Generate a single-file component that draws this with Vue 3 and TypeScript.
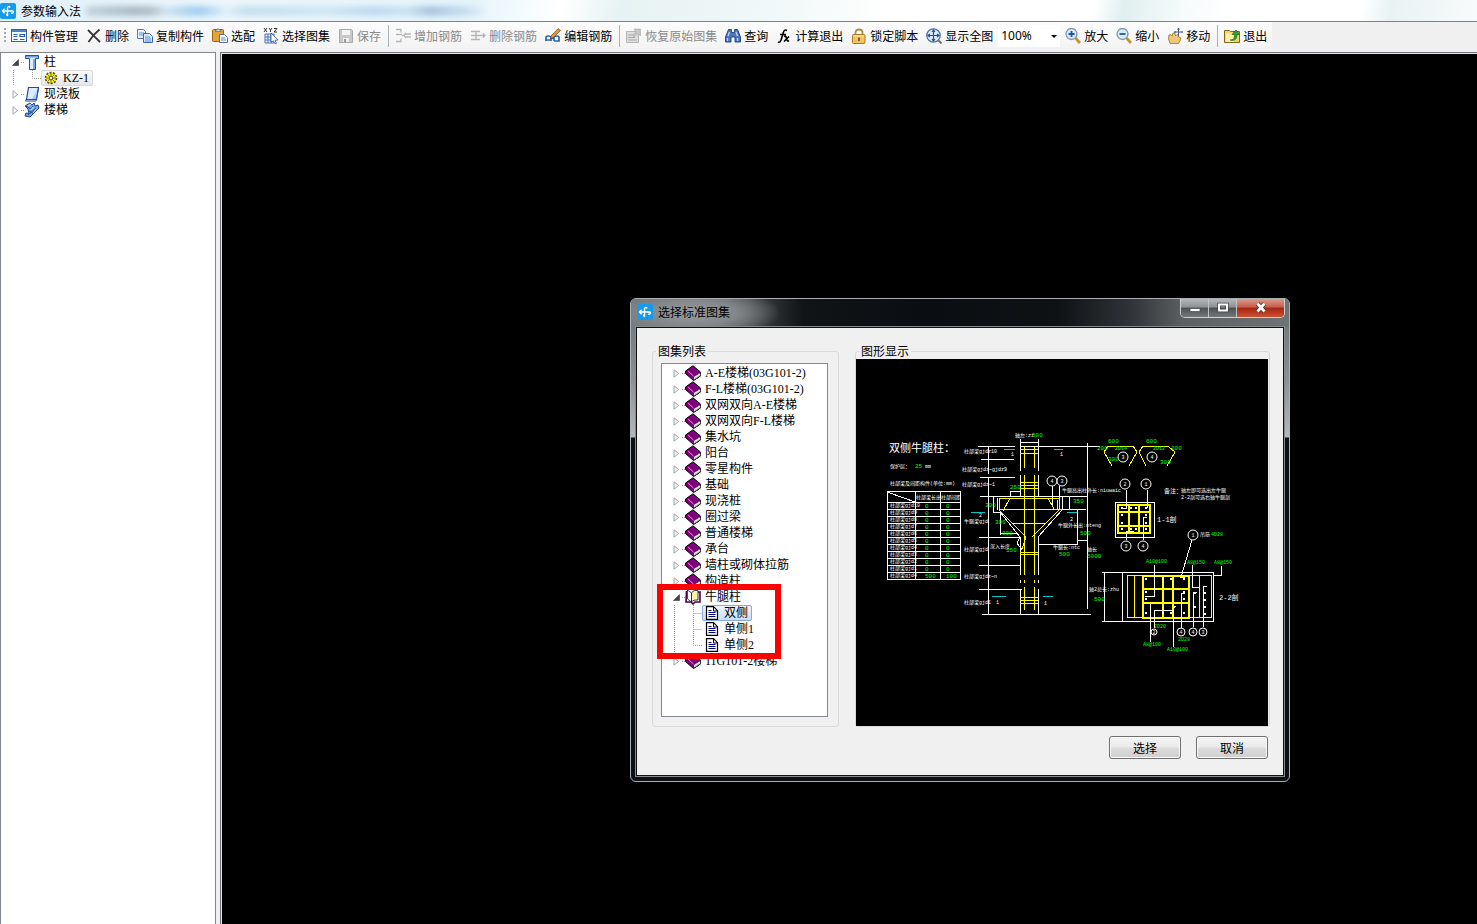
<script setup lang="ts">
import { ref } from 'vue'

type Tool = { label: string; icon: string; disabled?: boolean }
type Line = [string, string, number?]
type Label = [number, number, string, string, number?]

const icons: Record<string, string> = {
  app: '<rect width="16" height="16" rx="2" fill="#159bea"/><path d="M2.500 8h11M4.500 5.800L2.500 8l2 2.200M13.500 8c0 2-1 2.500-2.500 2.200M8 12.500c-1.500 0-1.500-1-1.500-2M7.500 13V5c0-1.500 2-2 2.500-.5" fill="none" stroke="#fff" stroke-width="1.400"/>',
  manage: '<rect x=".5" y="1.500" width="15" height="12" fill="#f2f8ff" stroke="#3b62a0"/><path d="M1 2h14v2H1z" fill="#4f7fc2"/><path d="M2.500 6.500h4M2.500 8.500h4M2.500 11.500h4M9 6.500h4.500v2H9zM9 11.500h4.500" stroke="#2c5ea8" fill="none" stroke-width="1.200"/>',
  remove: '<path d="M2 2c3 3 8 8 12 12M13.500 1.500C9 5 5 10 2.500 14" stroke="#333" stroke-width="1.800" fill="none"/>',
  copy: '<path d="M.5 1.500h6l2 2v7h-8z" fill="#eaf3ff" stroke="#5079bb"/><path d="M2 5h5M2 7h5" stroke="#5b8ed6"/><path d="M6.500 5.500h6l3 3v6h-9z" fill="#dceaff" stroke="#3a66b0"/><path d="M8 9h5M8 11h6M8 13h6" stroke="#5b8ed6"/>',
  paste: '<rect x=".5" y="1.500" width="11" height="12" rx="1" fill="#e3a43c" stroke="#9a6414"/><path d="M3.500 3.500V2H5L6 .5 7.500 2H9v1.500z" fill="#dcdcdc" stroke="#666" stroke-width=".7"/><path d="M7.500 6.500h5l3 3v5h-8z" fill="#f2f6ff" stroke="#5a6f9c"/><path d="M9 10h4M9 12h5" stroke="#5b8ed6"/>',
  atlas: '<path d="M1 0l3 4M4 0L1 4M6 0l1.500 2L9 0M7.500 2v2M11 .5h3L11 4h3" stroke="#222" stroke-width=".9" fill="none"/><path d="M2 6h9v9H2z" fill="#e7f1ff" stroke="#4b78b8"/><path d="M2 9h9M2 12h9M5 6v9M8 6v9" stroke="#4b78b8"/><path d="M8 5l7 7-3 .3 1.500 3-1.500.6-1.500-3L8 14z" fill="#fff" stroke="#334e80" stroke-width=".8"/>',
  save: '<path d="M1.500 1.500h12l1 1v12h-13z" fill="#c9c9c9" stroke="#aaa"/><path d="M4 2h8v5H4z" fill="#f4f4f4"/><path d="M5 10h6v4H5z" fill="#efefef"/><path d="M6 11h2v3H6z" fill="#999"/>',
  addbar: '<path d="M1 1.500h5v3M1 6.500h6M1 13.500h5v-3M7 7.500h3M11 5l-2 2.500 2 2.500M10 6h6M10 9h6" stroke="#b5b5b5" fill="none" stroke-width="1.300"/>',
  delbar: '<path d="M1 3.500h9M1 7.500h9M1 11.500h9M6 3.500v8M10 7.500h5M13 5.500l2 2-2 2" stroke="#b5b5b5" fill="none" stroke-width="1.400"/>',
  editbar: '<path d="M1 13V9.500c0-2 5-2 5 0V13M1 12h5M6 11l3-2M9 13V9.500c0-2 5-2 5 0V13h-5" stroke="#2a65b5" fill="none" stroke-width="1.700"/><path d="M6 8L13 .7l2.500 1.800-7 7-3 .8z" fill="#d99a43" stroke="#754512" stroke-width=".7"/>',
  restore: '<path d="M.5 3.500h12v11H.5z" fill="#e0e0e0" stroke="#b5b5b5"/><path d="M2 7h8M2 9.500h7M2 12h9" stroke="#aaa"/><path d="M8 1h6.500v7L12 5.500 8 9 6.500 7l3.500-3z" fill="#c6c6c6" stroke="#aaa" stroke-width=".6"/>',
  find: '<path d="M3.500 1.500h3v3h3v-3h3l3 7.500v5h-5.500V9H6v5H.5V9z" fill="#4b76b8" stroke="#1d3d78" stroke-width=".9"/><path d="M3 8l1.500-4M12.500 8l-1.500-4M2.500 10v3M12.500 10v3" stroke="#c3dbff" stroke-width="1.200"/>',
  fx: '<path d="M2 14c2 1 3-1 4-5l1.500-5C8 2 9.500 1.500 11 2.500M4 6.500h6M8 8.500c2-1 2 0 2.500 2s1 3 2.500 2M13 8.500l-5 5" stroke="#000" stroke-width="1.600" fill="none"/>',
  lock: '<path d="M4.500 8V4.500c0-4 7-4 7 0V8" fill="none" stroke="#b08f45" stroke-width="1.800"/><rect x="1.500" y="6.500" width="12.500" height="9" rx="1" fill="#f0c561" stroke="#a67a2a"/><path d="M8 9.500v3.500" stroke="#664511" stroke-width="1.600"/><path d="M2.500 8h10.500" stroke="#ffe9a8"/>',
  fit: '<circle cx="7.500" cy="7.500" r="6.700" fill="#deedfc" stroke="#52729c" stroke-width="1.300"/><path d="M7.500 2.500v10M2.500 7.500h10M6 4l1.500-2L9 4M6 11l1.500 2L9 11M4 6L2 7.500 4 9M11 6l2 1.500L11 9" stroke="#244f98" fill="none" stroke-width="1.200"/><path d="M12.500 12.500l3 3" stroke="#8c6a4b" stroke-width="2"/>',
  zoomin: '<circle cx="6.500" cy="6" r="5.500" fill="#d8eafc" stroke="#8295a9" stroke-width="1.300"/><path d="M3.500 6h6M6.500 3v6" stroke="#1e559e" stroke-width="1.800"/><path d="M10.500 10l4.500 5" stroke="#c59336" stroke-width="2.800"/>',
  zoomout: '<circle cx="6.500" cy="6" r="5.500" fill="#d8eafc" stroke="#8295a9" stroke-width="1.300"/><path d="M3.500 6h6" stroke="#1e559e" stroke-width="1.800"/><path d="M10.500 10l4.500 5" stroke="#c59336" stroke-width="2.800"/>',
  pan: '<path d="M3 15.500L1.500 11 2 7l2-.5L5 8l1-3h2l.5 3L10 6.500l1.500.5v2l2 .5V12l-2 3.500z" fill="#efc875" stroke="#9b7434" stroke-width=".8"/><path d="M11.500 0v8M7.500 4h8M10.500 1.500l1-1.500 1 1.500M8.500 3l-1 1 1 1M14.500 3l1 1-1 1" stroke="#465c85" fill="none"/>',
  exit: '<path d="M.5 2.500h5l1 1h9v11H.5z" fill="#f5d467" stroke="#84651c"/><path d="M2 5.500h8V14H2z" fill="#fff0a8"/><path d="M6 12c4 0 4.500-2 4.500-5.500H8L12 2l3.500 4.500H13c0 5.500-3 6.500-7 5.500z" fill="#2fa23b" stroke="#156a20" stroke-width=".7"/>',
  column: '<path d="M1.500 1.500h13v3h-3v11h-6v-11h-4z" fill="#dcecff" stroke="#1e4fa8"/><path d="M2 2h12v1.500H2z" fill="#6f9fe2"/><path d="M9 5h2v10H9z" fill="#7ba8e8"/>',
  gear: '<circle cx="7" cy="7" r="5.500" fill="#f4ed22" stroke="#4d4a00" stroke-width="1.500" stroke-dasharray="2 1.400"/><path d="M7 2v10M2 7h10M3.500 3.500l7 7M10.500 3.500l-7 7" stroke="#6b6700" stroke-width=".8"/><circle cx="7" cy="7" r="1.800" fill="#fff" stroke="#555"/>',
  slab: '<path d="M4.500 1.500h10l-2 12h-10z" fill="#dcecff" stroke="#1e4fa8" stroke-width="1.200"/><path d="M2.500 13l-1 2h10.500l2.500-13" fill="none" stroke="#1e4fa8"/><path d="M8 13l5-9-1 9z" fill="#a8c9f4"/>',
  stair: '<path d="M1 4l5-3 2 2 2-2 1 3 3-1 1 3-9 9-5-1 1-3 3 .5L4 7z" fill="#78a6e5" stroke="#1b488f"/><path d="M2 4l5 3 2-3M5 9l4 2 2-4M4 13l8-7" stroke="#1b488f" fill="none"/><path d="M4 4l3-2M7 8l2-3M9 11l3-4" stroke="#e5f1ff"/>',
  book: '<path d="M.5 6L8 .8 15.500 7v4L8.500 15.500.5 8.500z" fill="#800080" stroke="#000"/><path d="M8.500 11.800l7-4.300v3.300l-7 4.400z" fill="#fff" stroke="#222" stroke-width=".8"/><path d="M3 6l5.500 5" stroke="#d9a0d9" stroke-width=".9"/><path d="M9.500 13.400l5.500-3.400" stroke="#aaa" stroke-width=".7"/>',
  openbook: '<path d="M1.500 2L1 13h5l2 2 2-2h5V3h-2" fill="#fff" stroke="#4a004a" stroke-width="1.600"/><path d="M2.500 1l4 3v9l-4-3z" fill="#fff" stroke="#222" stroke-width=".8"/><path d="M6.500 13V4C8 1.500 10 1 13 1.500V11c-3 0-5 0-6.500 2z" fill="#fbf4b0" stroke="#222" stroke-width=".9"/>',
  page: '<path d="M1.500.700h7l4 4v8.600h-11z" fill="#fff" stroke="#000" stroke-width="1.200"/><path d="M8.500 1v4h4" fill="none" stroke="#000"/><path d="M3.500 4.500h3M3.500 6.500h7M3.500 8.500h7M3.500 10.500h7" stroke="#00007c"/>',
}

const firstTools: Tool[] = [
  { label: '构件管理', icon: 'manage' }, { label: '删除', icon: 'remove' },
  { label: '复制构件', icon: 'copy' }, { label: '选配', icon: 'paste' },
  { label: '选择图集', icon: 'atlas' }, { label: '保存', icon: 'save', disabled: true },
]
const barTools: Tool[] = [
  { label: '增加钢筋', icon: 'addbar', disabled: true }, { label: '删除钢筋', icon: 'delbar', disabled: true },
  { label: '编辑钢筋', icon: 'editbar' },
]
const viewTools: Tool[] = [
  { label: '恢复原始图集', icon: 'restore', disabled: true }, { label: '查询', icon: 'find' },
  { label: '计算退出', icon: 'fx' }, { label: '锁定脚本', icon: 'lock' }, { label: '显示全图', icon: 'fit' },
]
const zoomTools: Tool[] = [
  { label: '放大', icon: 'zoomin' }, { label: '缩小', icon: 'zoomout' }, { label: '移动', icon: 'pan' },
]
const zoom = ref('100%')

type Node = { label: string; icon: string; open?: boolean; children?: string[] }
const members: Node[] = [
  { label: '柱', icon: 'column', open: true, children: ['KZ-1'] },
  { label: '现浇板', icon: 'slab' },
  { label: '楼梯', icon: 'stair' },
]
const atlases: Node[] = [
  ...['A-E楼梯(03G101-2)', 'F-L楼梯(03G101-2)', '双网双向A-E楼梯', '双网双向F-L楼梯', '集水坑', '阳台', '零星构件',
    '基础', '现浇桩', '圈过梁', '普通楼梯', '承台', '墙柱或砌体拉筋', '构造柱'].map((label) => ({ label, icon: 'book' })),
  { label: '牛腿柱', icon: 'openbook', open: true, children: ['双侧', '单侧1', '单侧2'] },
  { label: '11G101-2楼梯', icon: 'book' },
]
const selected = ref('双侧')

const W = '#fff', Y = '#ff0', G = '#0f0', C = '#00c8c8'
const rowY = Array.from({ length: 11 }, (_, i) => 143 + i * 7)
const lines: Line[] = [
  /* rebar table */
  [W, 'M31 132H104V220H31ZM59 132V220M84 132V220M31 133L59 143' + rowY.map((y) => `M31 ${y}H104`).join('')],
  /* column faces and dimension lines */
  [W, 'M164 80V112M182 80V112M164 116V137M182 116V137M164 178V216M182 178V216M164 221V224M182 221V224M164 230V256M182 230V256'],
  [W, 'M164 83H182M122 87H159M164 87H244M125 100H158M124 118H159M124 137H231M123 178H164M123 206H164M123 230H166M126 255H235'],
  [W, 'M132 87V115M132 118V255M231 84V250M154 137V132H164'],
  [W, 'M137 137V153H144L164 178M206 137V151L182 178M141 139V151M144 153V176M144 174H161M164 178L161 184L166 191'],
  [W, 'M213 137V150M206 150H230M221 150V181M182 185H221V181H231M196 127V148M203 127V139'],
  /* column rebar */
  [Y, 'M168 87V109M178 87V109M168 116V216M178 116V216M168 221V224M178 221V224M168 228V251M178 228V251'],
  [Y, 'M164 90H182M164 94H182M164 123H182M164 126H182M164 129H182M164 193H182M164 195H182M164 238H182M164 241H182M164 244H182'],
  [Y, 'M203 139H143V151L170 178M203 139V151L176 178M143 150H206M157 164H190M154 139L147 152M192 139L198 150M201 141V151M170 178L166 190'],
  [C, 'M148 90H159M198 90H207M115 153H129M211 153H221M136 237H150M187 237H197'],
  /* bent bars */
  [Y, 'M256 107L248 93L252 87H277L281 93L273 107M290 107L283 93L287 87H312L319 93L311 107'],
  /* section 1-1 */
  [W, 'M259 143H298V178H259Z'],
  [Y, 'M262 146H294V174H262ZM273 146V174M283 146V174M262 153H294M262 167H294', 2],
  [W, 'M270 131V149H266M291 131V149M270 181V172H278M287 181V158H291'],
  /* section 2-2 */
  [W, 'M246 213H357V262H246M266 213V262M248 213V262M336 206V228H344M365 207V216H357'],
  [Y, 'M271 216H355V258H271ZM278 216V258M343 216V258'],
  [Y, 'M287 217H333V259H287ZM307 217V259M317 217V259M287 230H333M287 244H333', 2],
  [W, 'M298 206V237H289M336 181L325 218H329M337 268V233H341M347 268V227H351M325 269V234H329M298 269V251H318M294 283V245M317 288V249L320 247'],
  /* bar dots */
  [W, 'M265 149h2M274 149h2M279 149h2M289 149h2M265 156h2M289 156h2M265 164h2M289 164h2M265 170h2M274 170h2M279 170h2M289 170h2M289 220h2M306 220h2M314 220h2M327 220h2M289 233h2M327 233h2M289 240h2M327 240h2M289 254h2M306 254h2M314 254h2M327 254h2M338 234h2M338 248h2M348 234h2M348 241h2M348 248h2M348 255h2', 2],
]
const circles: [number, number, number, string][] = [
  [196, 122, 5, '4'], [206, 122, 5, '3'], [267, 98, 5, '3'], [296, 98, 5, '4'], [269, 125, 5, '2'], [290, 125, 5, '1'],
  [270, 187, 5, '3'], [287, 187, 5, '4'], [337, 176, 5, '1'], [298, 273, 3, '2'], [325, 273, 4, '4'], [337, 273, 4, '4'], [347, 273, 4, '3'],
]
const labels: Label[] = [
  [33, 93, '双侧牛腿柱：', W, 11], [34, 109, '保护层：', W], [59, 109, '25', G, 6], [69, 109, 'mm', W],
  [34, 126, '柱部梁及间距构件(单位:mm)', W],
  [60, 140, '柱部梁长出', W], [85, 140, '柱部间距', W],
  ...rowY.flatMap((y, i): Label[] => [
    [34, y + 5, '柱部梁gjd' + (i < 10 ? 10 - i : 4), W],
    [69, y + 6, i < 10 ? '0' : '500', G, 6],
    [90, y + 6, i < 10 ? '0' : '100', G, 6],
  ]),
  [108, 94, '柱部梁gjdz10', W], [106, 112, '柱部梁gjdz~gjdz9', W], [106, 127, '柱部梁gjdz~1', W],
  [108, 164, '牛腿梁gjd', W], [108, 192, '柱部梁gjd', W], [134, 189, '深入长度', W],
  [108, 219, '柱部梁gjdz~n', W], [108, 245, '柱部梁gjd1', W], [159, 78, '轴左:zz', W],
  [155, 97, '1', W], [204, 97, '1', W], [123, 158, '2', W], [214, 162, '2', W], [140, 245, '1', W], [188, 246, '1', W],
  [206, 133, '牛腿高出柱外长:niuwaic', W], [202, 168, '牛腿外长出:nteng', W], [197, 190, '牛腿长:ntc', W], [231, 192, '轴长', W],
  [176, 78, '500', G, 6], [154, 130, '250', G, 6], [129, 148, '300', G, 6], [139, 165, '300', G, 6], [146, 176, '300', G, 6],
  [150, 193, '150', G, 6], [217, 144, '350', G, 6], [224, 176, '500', G, 6], [203, 197, '500', G, 6], [231, 199, '5000', G, 6],
  [252, 84, '600', G, 6], [290, 84, '600', G, 6], [241, 91, '200', G, 6], [315, 91, '200', G, 6], [259, 91, '2D14', G], [297, 91, '2D12', G],
  [252, 102, '300', G, 6], [304, 105, '300', G, 6], [301, 163, '1-1剖', W, 7], [308, 134, '备注：', W, 6],
  [325, 133, '轴左即可选出左牛腿', W], [325, 140, '2-2剖可选右轴牛腿剖', W],
  [344, 177, '吊筋', W], [355, 177, '4D28', G], [290, 204, 'A10@100', G], [331, 205, 'A8@150', G], [358, 205, 'A8@150', G],
  [233, 232, '轴2总长:zhu', W], [238, 242, '500', G, 6], [363, 241, '2-2剖', W, 7],
  [298, 269, '2D20', G], [322, 282, '2D28', G], [287, 287, 'A8@100', G], [311, 292, 'A10@100', G],
]
</script>

<template>
  <main class="window">
    <header class="titlebar">
      <svg class="icon" viewBox="0 0 16 16" aria-hidden="true" v-html="icons.app" />
      <h1>参数输入法</h1>
      <span class="haze" aria-hidden="true" />
    </header>

    <div class="toolbar-row">
      <div class="toolbar" role="toolbar" aria-label="工具栏">
        <span class="grip" aria-hidden="true" />
        <template v-for="(group, g) in [firstTools, barTools, viewTools]" :key="g">
          <span v-if="g" class="sep" aria-hidden="true" />
          <button v-for="t in group" :key="t.label" type="button" class="tool" :disabled="t.disabled">
            <svg class="icon" viewBox="0 0 16 16" aria-hidden="true" v-html="icons[t.icon]" />{{ t.label }}
          </button>
        </template>
        <span class="combo">
          <select v-model="zoom" aria-label="显示比例">
            <option>50%</option>
            <option>100%</option>
            <option>200%</option>
          </select>
          <i class="caret" aria-hidden="true" />
        </span>
        <button v-for="t in zoomTools" :key="t.label" type="button" class="tool">
          <svg class="icon" viewBox="0 0 16 16" aria-hidden="true" v-html="icons[t.icon]" />{{ t.label }}
        </button>
        <span class="sep" aria-hidden="true" />
        <button type="button" class="tool">
          <svg class="icon" viewBox="0 0 16 16" aria-hidden="true" v-html="icons.exit" />退出
        </button>
      </div>
    </div>

    <div class="body">
      <nav class="sidebar" aria-label="构件">
        <ul class="tree">
          <li v-for="n in members" :key="n.label">
            <button type="button" class="node">
              <svg class="arrow" viewBox="0 0 7 9" aria-hidden="true">
                <path v-if="n.open" class="opened" d="M6.500 1.500V7.500H.5Z" />
                <path v-else class="closed" d="M1 .8L5.500 4.500L1 8.200Z" />
              </svg>
              <i class="dots" />
              <svg class="icon" viewBox="0 0 16 16" aria-hidden="true" v-html="icons[n.icon]" />
              <span>{{ n.label }}</span>
            </button>
            <ul v-if="n.children" class="tree-children">
              <li v-for="c in n.children" :key="c" class="leaf-row">
                <svg class="guide" viewBox="0 0 40 16" aria-hidden="true"><path d="M12.500 0V16M31.500 0V8.500H40" /></svg>
                <button type="button" class="leaf current">
                  <svg class="small" viewBox="0 0 14 14" aria-hidden="true" v-html="icons.gear" />{{ c }}
                </button>
              </li>
            </ul>
          </li>
        </ul>
      </nav>
      <section class="canvas" aria-label="图形区" />
    </div>

    <section class="dialog" role="dialog" aria-labelledby="dlg-title">
      <header class="dialog-title">
        <svg class="icon" viewBox="0 0 16 16" aria-hidden="true" v-html="icons.app" />
        <h2 id="dlg-title">选择标准图集</h2>
        <div class="controls">
          <button type="button" class="ctl" aria-label="最小化">
            <svg viewBox="0 0 14 12" aria-hidden="true"><path d="M2 6.500h10v3H2z" fill="#fff" stroke="#444" stroke-width=".7" /></svg>
          </button>
          <button type="button" class="ctl" aria-label="最大化">
            <svg viewBox="0 0 14 12" aria-hidden="true"><path d="M3 2.500h8v6H3z" fill="none" stroke="#444" stroke-width="3.400" /><path d="M3 2.500h8v6H3z" fill="none" stroke="#fff" stroke-width="2" /></svg>
          </button>
          <button type="button" class="ctl close" aria-label="关闭">
            <svg viewBox="0 0 14 12" aria-hidden="true"><path d="M3.500 1.500l7 8M10.500 1.500l-7 8" stroke="#5b2620" stroke-width="4.400" /><path d="M3.500 1.500l7 8M10.500 1.500l-7 8" stroke="#fff" stroke-width="2.800" /></svg>
          </button>
        </div>
      </header>

      <div class="client">
        <div class="panels">
          <fieldset class="list-group">
            <legend>图集列表</legend>
            <div class="listbox">
              <ul class="tree">
                <li v-for="n in atlases" :key="n.label">
                  <button type="button" class="node">
                    <svg class="arrow" viewBox="0 0 7 9" aria-hidden="true">
                      <path v-if="n.open" class="opened" d="M6.500 1.500V7.500H.5Z" />
                      <path v-else class="closed" d="M1 .8L5.500 4.500L1 8.200Z" />
                    </svg>
                    <i class="dots" />
                    <svg class="icon" viewBox="0 0 16 16" aria-hidden="true" v-html="icons[n.icon]" />
                    <span>{{ n.label }}</span>
                  </button>
                  <ul v-if="n.children" class="tree-children">
                    <li v-for="(c, i) in n.children" :key="c" class="leaf-row">
                      <svg class="guide" viewBox="0 0 40 16" aria-hidden="true">
                        <path :d="i === n.children.length - 1 ? 'M12.500 0V16M31.500 0V8.500H40' : 'M12.500 0V16M31.500 0V16M31.500 8.500H40'" />
                      </svg>
                      <button type="button" class="leaf" :class="{ selected: selected === c }" @click="selected = c">
                        <svg class="small" viewBox="0 0 14 14" aria-hidden="true" v-html="icons.page" />{{ c }}
                      </button>
                    </li>
                  </ul>
                </li>
              </ul>
              <span class="marker" aria-hidden="true" />
            </div>
          </fieldset>

          <fieldset class="preview-group">
            <legend>图形显示</legend>
            <svg class="drawing" viewBox="0 0 412 367" role="img" aria-label="双侧牛腿柱">
              <g shape-rendering="crispEdges" fill="none">
                <path v-for="(l, i) in lines" :key="i" :d="l[1]" :stroke="l[0]" :stroke-width="l[2] ?? 1" />
              </g>
              <g v-for="(c, i) in circles" :key="'c' + i">
                <circle :cx="c[0]" :cy="c[1]" :r="c[2]" fill="#000" stroke="#fff" />
                <text :x="c[0]" :y="c[1] + 2" text-anchor="middle" fill="#fff" font-size="5">{{ c[3] }}</text>
              </g>
              <text v-for="(t, i) in labels" :key="'t' + i" :x="t[0]" :y="t[1]" :fill="t[3]" :font-size="t[4] ?? 5">{{ t[2] }}</text>
            </svg>
          </fieldset>
        </div>

        <footer class="actions">
          <button type="button">选择</button>
          <button type="button">取消</button>
        </footer>
      </div>
    </section>
  </main>
</template>

<style>
html, body { margin: 0; height: 100%; }
#app { height: 100%; }
</style>

<style scoped>
* { box-sizing: border-box; }
.window {
  position: relative;
  display: flex;
  flex-direction: column;
  height: 100%;
  min-height: 800px;
  overflow: hidden;
  background: #f0f0f0;
  color: #000;
  font: 12px/16px "Noto Sans CJK SC", sans-serif;
}
button, select { font: inherit; color: inherit; }
button { margin: 0; padding: 0; border: 0; background: none; white-space: nowrap; }
h1, h2 { margin: 0; font-size: 12px; font-weight: 400; line-height: 16px; }
ul { margin: 0; padding: 0; list-style: none; }
.icon { flex: none; display: block; width: 16px; height: 16px; }

.titlebar {
  display: flex;
  flex: none;
  align-items: center;
  gap: 5px;
  height: 22px;
  border-bottom: 1px solid #71858f;
  background: linear-gradient(100deg, #dff0fb 0, #eef7fb 14%, #e6f5fb 32%, #fff 38%, #e6f2f3 42%, #f3f9f9 54%, #fff 60%, #fff 74%, #e0efef 76%, #f6fbfb 80%, #fff 83%, #fff 92%, #e9f2f3 94%, #f8fbfb 100%);
}
.haze {
  width: 400px;
  height: 10px;
  filter: blur(3px);
  background: linear-gradient(90deg, #b3c4cf 0, #8d9fac 12%, #96a5b4 16%, #c4dcea 20%, #79b8ec 28%, #a9d2f2 32%, #dceefa 35%, #b5d4e9 40%, #c5e0f2 60%, #a9cdea 72%, #bedcf0 80%, #8caed0 86%, #b5d0e8 94%, #e3f1fa 100%);
  opacity: .7;
}

.toolbar-row { flex: none; height: 30px; background: #f0f0f0; }
.toolbar {
  display: flex;
  align-items: center;
  width: max-content;
  height: 28px;
  padding-right: 1px;
  background: linear-gradient(#fcfcfc, #f3f3f3);
}
.grip { width: 2px; height: 16px; margin: 0 1px 0 4px; background: repeating-linear-gradient(#aaa 0 2px, transparent 2px 4px); }
.tool { display: flex; align-items: center; gap: 3px; height: 24px; padding: 0 4px; }
.tool:disabled { color: #8a8a8a; }
.sep { width: 1px; height: 22px; margin: 0 2px 0 3px; background: #a9b1b9; }
.combo { position: relative; display: flex; width: 62px; height: 22px; margin: 0 1px; background: #fff; }
.combo select { width: 100%; padding: 0 0 0 3px; border: 0; background: none; appearance: none; font-family: "Noto Sans", sans-serif; }
.caret { position: absolute; right: 3px; top: 10px; border: 3px solid transparent; border-top-color: #000; pointer-events: none; }

.body { flex: 1; display: flex; gap: 4px; min-height: 0; }
.sidebar { width: 216px; border: 1px solid #828790; border-bottom: 0; padding-top: 1px; background: #fff; }
.canvas { flex: 1; border: 1px solid #70747a; border-width: 1px 0 0 1px; box-shadow: inset 1px 1px 0 #e9e9e9; background: #000; }

.tree { font-family: "Liberation Serif", "Noto Sans CJK SC", serif; }
.node { display: flex; align-items: center; height: 16px; padding-left: 11px; line-height: 16px; }
.arrow { width: 7px; height: 9px; margin-right: 2px; }
.arrow .opened { fill: #444; stroke: #222; stroke-width: .5; }
.arrow .closed { fill: #fff; stroke: #a0a0a0; }
.dots { width: 3px; height: 1px; background: repeating-linear-gradient(90deg, #999 0 1px, transparent 1px 2px); }
.node span { margin-left: 4px; }
.leaf-row { display: flex; height: 16px; }
.guide { flex: none; width: 40px; height: 16px; }
.guide path { fill: none; stroke: #999; stroke-dasharray: 1 1; }
.leaf { display: flex; align-items: center; gap: 5px; height: 16px; padding: 0 3px 0 2px; border: 1px solid transparent; border-radius: 2px; line-height: 14px; }
.small { flex: none; width: 14px; height: 14px; }
.leaf.current { border-color: #d9d9d9; background: linear-gradient(#fafafa, #e6e6e6); }
.leaf.selected { border-color: #84acdd; background: linear-gradient(#eef5fe, #c6ddf8); }

.dialog {
  position: absolute;
  left: 630px;
  top: 298px;
  width: 660px;
  padding: 0 5px 5px;
  border: 1px solid #a9b0b4;
  border-radius: 6px;
  background: linear-gradient(#6b7072 0, #8b8f91 80px, #b5b8ba 138px, #0c1014 139px, #0c1014 100%);
}
.dialog-title {
  display: flex;
  align-items: center;
  gap: 5px;
  height: 28px;
  margin: 0 -5px;
  padding: 0 0 2px 6px;
  border-radius: 5px 5px 0 0;
  background:
    radial-gradient(ellipse 90px 26px at 60px 14px, #999c9e 0, #83878a 50%, transparent 100%),
    linear-gradient(90deg, #707477 0, #5c6063 14%, #101417 26%, #0a0d11 45%, #0e1215 65%, #303438 76%, #5c6063 84%, #6e7275 100%);
}
.controls {
  display: flex;
  align-self: flex-start;
  margin-left: auto;
  margin-right: 4px;
  border: 1px solid #cdd1d3;
  border-top: 0;
  border-radius: 0 0 5px 5px;
  overflow: hidden;
}
.ctl { display: grid; place-items: center; width: 28px; height: 18px; border-right: 1px solid #c0c4c6; background: linear-gradient(#b4b7b9 0, #8e9294 45%, #4c5154 50%, #74797c 100%); }
.ctl svg { width: 14px; height: 12px; }
.ctl.close { width: 47px; border: 0; background: linear-gradient(#dc9a8d 0, #c75e4b 45%, #a42613 50%, #cd5130 100%); }

.client { display: flex; flex-direction: column; padding: 15px 13px 16px 15px; border: 1px solid #111; outline: 1px solid #858a8d; background: #f0f0f0; }
.panels { display: flex; gap: 16px; }
fieldset { min-width: 0; margin: 0; padding: 0; border: 1px solid #d9dadb; border-radius: 3px; }
legend { height: 16px; padding: 0 2px; line-height: 16px; }
.list-group { display: flex; width: 187px; padding: 4px 10px 9px 8px; }
.list-group legend { margin-left: -5px; }
.preview-group { flex: 1; padding-right: 1px; }
.preview-group legend { margin-left: 3px; }
.listbox { position: relative; flex: 1; padding-top: 1px; border: 1px solid #828790; background: #fff; }
.marker { position: absolute; left: -5px; top: 220px; width: 124px; height: 75px; border: 6px solid #f00; }
.drawing { display: block; width: 100%; background: #000; font-family: "Liberation Mono", "Noto Sans CJK SC", monospace; }

.actions { display: flex; justify-content: flex-end; gap: 15px; padding: 9px 2px 0 0; }
.actions button { width: 72px; height: 23px; border: 1px solid #707070; border-radius: 3px; background: linear-gradient(#f3f3f3 0, #ebebeb 48%, #dcdcdc 52%, #cfcfcf 100%); box-shadow: inset 0 0 0 1px #fafafa; }
</style>
